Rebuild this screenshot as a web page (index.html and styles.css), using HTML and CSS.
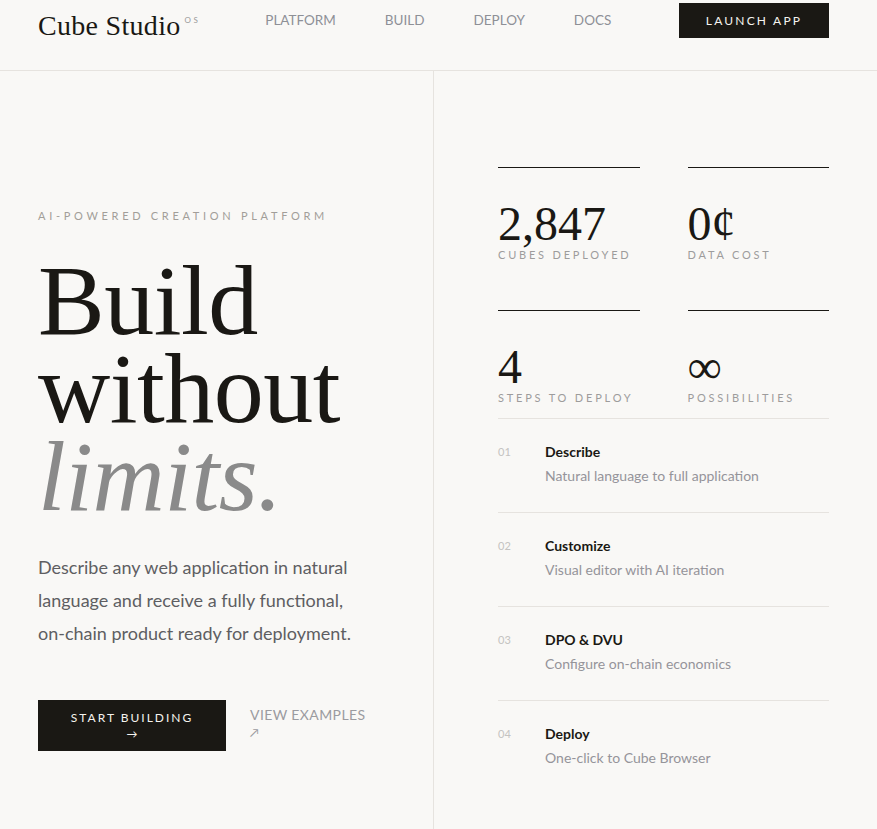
FILE: index.html
```html
<!DOCTYPE html>
<html lang="en">
<head>
<meta charset="utf-8">
<title>Cube Studio</title>
<link rel="stylesheet" href="styles.css">
</head>
<body>
<header class="topbar">
  <a class="brand" href="#">Cube Studio<sup class="brand-tag">OS</sup></a>
  <nav class="nav">
    <a href="#">PLATFORM</a>
    <a href="#">BUILD</a>
    <a href="#">DEPLOY</a>
    <a href="#">DOCS</a>
  </nav>
  <a class="btn btn-dark btn-launch" href="#">LAUNCH APP</a>
</header>

<main class="hero">
  <section class="hero-left">
    <p class="eyebrow">AI-POWERED CREATION PLATFORM</p>
    <h1 class="headline">Build<br>without<br><em>limits.</em></h1>
    <p class="lead">Describe any web application in natural language and receive a fully functional, on-chain product ready for deployment.</p>
    <div class="actions">
      <a class="btn btn-dark btn-start" href="#">START BUILDING <span class="arrow">→</span></a>
      <a class="link-examples" href="#">VIEW EXAMPLES <span class="arrow-ne">↗</span></a>
    </div>
  </section>

  <section class="hero-right">
    <div class="stats">
      <div class="stat">
        <div class="stat-value">2,847</div>
        <div class="stat-label">CUBES DEPLOYED</div>
      </div>
      <div class="stat">
        <div class="stat-value">0¢</div>
        <div class="stat-label">DATA COST</div>
      </div>
      <div class="stat">
        <div class="stat-value">4</div>
        <div class="stat-label">STEPS TO DEPLOY</div>
      </div>
      <div class="stat">
        <div class="stat-value">∞</div>
        <div class="stat-label">POSSIBILITIES</div>
      </div>
    </div>

    <ol class="steps">
      <li class="step">
        <span class="step-num">01</span>
        <div>
          <h3 class="step-title">Describe</h3>
          <p class="step-desc">Natural language to full application</p>
        </div>
      </li>
      <li class="step">
        <span class="step-num">02</span>
        <div>
          <h3 class="step-title">Customize</h3>
          <p class="step-desc">Visual editor with AI iteration</p>
        </div>
      </li>
      <li class="step">
        <span class="step-num">03</span>
        <div>
          <h3 class="step-title">DPO &amp; DVU</h3>
          <p class="step-desc">Configure on-chain economics</p>
        </div>
      </li>
      <li class="step">
        <span class="step-num">04</span>
        <div>
          <h3 class="step-title">Deploy</h3>
          <p class="step-desc">One-click to Cube Browser</p>
        </div>
      </li>
    </ol>
  </section>
</main>
</body>
</html>
```

FILE: styles.css
```css
* {
  box-sizing: border-box;
}

html, body {
  margin: 0;
  padding: 0;
}

body {
  background: #f9f8f6;
  color: #1a1814;
  font-family: "Lato", "Noto Sans", sans-serif;
  min-height: 100vh;
}

a {
  text-decoration: none;
  color: inherit;
}

/* ---------- top bar ---------- */
.topbar {
  height: 71px;
  display: flex;
  align-items: flex-start;
  padding: 3px 48px 0 38px;
  border-bottom: 1px solid #e6e3df;
}

.brand {
  font-family: "Liberation Serif", "DejaVu Serif", serif;
  font-size: 28px;
  line-height: 35px;
  color: #1a1814;
  letter-spacing: 0.3px;
}

.brand-tag {
  font-family: "Lato", sans-serif;
  font-size: 8px;
  letter-spacing: 2.5px;
  color: #9a9a9a;
  vertical-align: 12px;
  margin-left: 4px;
}

.nav {
  display: flex;
  gap: 49px;
  margin-left: 65px;
  line-height: 35px;
}

.nav a {
  font-size: 13.5px;
  letter-spacing: 0;
  color: #8e9096;
}

.btn {
  display: inline-flex;
  align-items: center;
  justify-content: center;
}

.btn-dark {
  background: #1a1814;
  color: #f5f3ef;
  font-size: 12px;
  letter-spacing: 2.2px;
}

.btn-launch {
  margin-left: auto;
  width: 150px;
  height: 35px;
}

/* ---------- hero ---------- */
.hero {
  display: grid;
  grid-template-columns: 434px 1fr;
  min-height: calc(100vh - 71px);
}

.hero-left {
  border-right: 1px solid #e6e3df;
  padding: 138px 30px 40px 38px;
}

.eyebrow {
  margin: 0;
  font-size: 11px;
  line-height: 14px;
  letter-spacing: 3.7px;
  color: #a29e99;
}

.headline {
  margin: 34px 0 0;
  font-family: "Liberation Serif", "DejaVu Serif", serif;
  font-weight: 400;
  font-size: 100px;
  line-height: 88px;
  letter-spacing: -0.5px;
  color: #1a1814;
}

.headline em {
  color: #8a8a8a;
}

.lead {
  margin: 30px 0 0;
  font-size: 18px;
  line-height: 33px;
  color: #5e5e62;
  max-width: 332px;
}

.actions {
  display: flex;
  align-items: flex-start;
  gap: 24px;
  margin-top: 50px;
}

.btn-start {
  width: 188px;
  height: 51px;
  flex-direction: column;
  line-height: 16px;
  font-size: 12px;
  letter-spacing: 2px;
}

.btn-start .arrow {
  display: block;
  letter-spacing: 0;
  font-size: 11px;
}

.link-examples {
  font-size: 14px;
  line-height: 18px;
  letter-spacing: 0.4px;
  color: #9b9ba0;
  margin-top: 6px;
}

.arrow-ne {
  display: block;
  font-size: 12px;
}

/* ---------- right column ---------- */
.hero-right {
  padding: 96px 48px 40px 64px;
}

.stats {
  display: grid;
  grid-template-columns: 1fr 1fr;
  column-gap: 48px;
  row-gap: 48px;
  margin-bottom: 13px;
}

.stat {
  border-top: 1px solid #1a1814;
  padding-top: 32px;
}

.stat-value {
  font-family: "Liberation Serif", "DejaVu Serif", serif;
  font-size: 48px;
  line-height: 48px;
  color: #1a1814;
}

.stat-label {
  font-size: 11px;
  line-height: 14px;
  letter-spacing: 2.8px;
  color: #9d9c9c;
}

.steps {
  list-style: none;
  margin: 0;
  padding: 0;
  border-top: 1px solid #e6e3df;
}

.step {
  display: grid;
  grid-template-columns: 47px 1fr;
  padding: 23px 0 26px;
  border-bottom: 1px solid #e6e3df;
}

.step:last-child {
  border-bottom: none;
}

.step-num {
  font-size: 11px;
  line-height: 20px;
  color: #c4c3c1;
}

.step-title {
  margin: 0;
  font-size: 14px;
  line-height: 20px;
  font-weight: 700;
  color: #1a1814;
}

.step-desc {
  margin: 4px 0 0;
  font-size: 14px;
  line-height: 20px;
  color: #95949a;
}
```
